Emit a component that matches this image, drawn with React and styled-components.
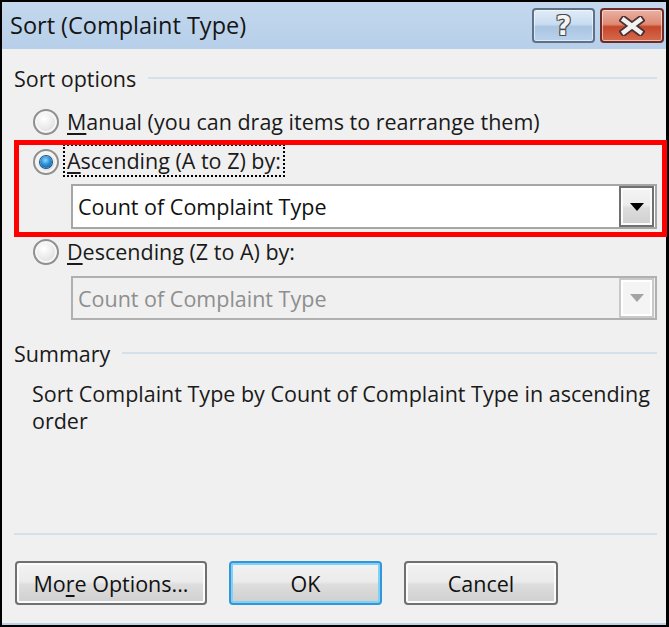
import React from 'react';
import styled, { createGlobalStyle } from 'styled-components';

const GlobalStyle = createGlobalStyle`
  html, body {
    margin: 0;
    padding: 0;
    background: #ffffff;
  }
  body {
    font-family: "Open Sans", "Noto Sans", "DejaVu Sans", sans-serif;
  }
`;

const Window = styled.div`
  width: 669px;
  height: 627px;
  box-sizing: border-box;
  background: #000;
  padding: 2px 3px 2px 2px;
  display: flex;
  flex-direction: column;
`;

const TitleBar = styled.div`
  height: 47px;
  flex: none;
  display: flex;
  align-items: flex-start;
  padding-left: 8px;
  background: linear-gradient(#c3d8ee, #b7cfe9);
`;

const Title = styled.div`
  font-size: 23.5px;
  line-height: 47px;
  color: #151515;
  flex: 1;
  white-space: nowrap;
`;

const CaptionButton = styled.div`
  width: ${(p) => p.w}px;
  height: 35px;
  margin-top: 6px;
  margin-right: ${(p) => p.mr}px;
  box-sizing: border-box;
  border: 2px solid ${(p) => (p.close ? '#6e2c28' : '#5f7188')};
  border-radius: 4px;
  display: flex;
  align-items: center;
  justify-content: center;
  background: ${(p) =>
    p.close
      ? 'linear-gradient(#eab0a2 0%, #de8a74 46%, #c6482c 54%, #d56a4d 100%)'
      : 'linear-gradient(#e1ecf7 0%, #c9dcf0 46%, #aac5e2 54%, #bad2ec 100%)'};
  box-shadow: inset 0 0 0 1px rgba(255, 255, 255, 0.55);
`;

const HelpGlyph = styled.span`
  font-family: "DejaVu Sans", sans-serif;
  font-weight: bold;
  font-size: 27px;
  line-height: 1;
  color: #f4f4f4;
  text-shadow: -1px -1px 0 #4a4a4a, 1px -1px 0 #4a4a4a, -1px 1px 0 #4a4a4a,
    1px 1px 0 #4a4a4a;
`;

const Body = styled.div`
  flex: 1;
  background: #f0f0f0;
  border-bottom: 2px solid #bcd2e9;
  padding: 16px 9px 18px 12px;
  display: flex;
  flex-direction: column;
  font-size: 21.5px;
  color: #1a1a1a;
`;

const SectionHeader = styled.div`
  height: 26px;
  margin-top: ${(p) => p.mt || 0}px;
  display: flex;
  align-items: center;
  gap: 12px;
  white-space: nowrap;
  &::after {
    content: '';
    flex: 1;
    height: 2px;
    background: #d6e0e8;
  }
`;

const Options = styled.div`
  padding-left: 19px;
  display: flex;
  flex-direction: column;
`;

const RadioRow = styled.div`
  height: ${(p) => p.h || 26}px;
  margin-top: ${(p) => p.mt || 0}px;
  display: flex;
  align-items: center;
  gap: 4px;
  white-space: nowrap;
`;

const RadioCircle = styled.span`
  width: 26px;
  height: 26px;
  box-sizing: border-box;
  border-radius: 50%;
  border: 2px solid #8f9090;
  background: radial-gradient(circle at 40% 35%, #ffffff 0%, #ececec 45%, #cfcfcf 100%);
  box-shadow: inset 0 0 0 2px #f6f6f6;
  display: flex;
  align-items: center;
  justify-content: center;
  flex: none;
  margin-top: 2px;
  &::after {
    content: '';
    display: ${(p) => (p.checked ? 'block' : 'none')};
    width: 12px;
    height: 12px;
    border-radius: 50%;
    background: radial-gradient(circle at 45% 35%, #8fd6ff 0%, #2a8fd6 45%, #0c4f8a 100%);
    box-shadow: 0 0 0 1px #1d4f7a;
  }
`;

const Label = styled.span`
  padding: 0 2px;
  line-height: 29px;
  border: 2px dotted ${(p) => (p.focused ? '#000' : 'transparent')};
`;

const Key = styled.span`
  text-decoration: underline;
  text-underline-offset: 3px;
  text-decoration-thickness: 2px;
`;

const Highlighted = styled.div`
  position: relative;
  margin-top: 10px;
  display: flex;
  flex-direction: column;
`;

const RedFrame = styled.div`
  position: absolute;
  top: -4px;
  left: -19px;
  right: -10px;
  bottom: -8px;
  border: 5px solid #ff0000;
  pointer-events: none;
`;

const Select = styled.div`
  height: ${(p) => p.h}px;
  margin-top: ${(p) => p.mt}px;
  margin-left: 38px;
  box-sizing: border-box;
  border: 2px solid ${(p) => (p.disabled ? '#b0b0b0' : '#a6a6a6')};
  background: ${(p) => (p.disabled ? '#f0f0f0' : '#ffffff')};
  color: ${(p) => (p.disabled ? '#8e8e8e' : '#111')};
  display: flex;
  align-items: center;
  padding-left: 5px;
  white-space: nowrap;
`;

const SelectText = styled.span`
  flex: 1;
`;

const DropButton = styled.span`
  width: 35px;
  align-self: stretch;
  margin: 0 1px 0 0;
  box-sizing: border-box;
  border: 2px solid ${(p) => (p.disabled ? '#c9c9c9' : '#707070')};
  background: ${(p) =>
    p.disabled
      ? '#f4f4f4'
      : 'linear-gradient(#f4f4f4 0%, #ececec 46%, #dcdcdc 54%, #d0d0d0 100%)'};
  box-shadow: inset 0 0 0 2px ${(p) => (p.disabled ? '#ffffff' : '#fbfbfb')};
  display: flex;
  align-items: center;
  justify-content: center;
`;

const Arrow = ({ color }) => (
  <svg width="14" height="8" viewBox="0 0 14 8">
    <path d="M0 0 H14 L7 8 Z" fill={color} />
  </svg>
);

const Summary = styled.div`
  margin-top: 14px;
  padding-left: 18px;
  line-height: 27px;
  white-space: nowrap;
`;

const Separator = styled.div`
  margin-top: auto;
  height: 2px;
  background: #d6e0e8;
`;

const ButtonRow = styled.div`
  margin-top: 26px;
  padding-left: 1px;
  display: flex;
  gap: 22px;
`;

const Button = styled.div`
  width: ${(p) => p.w}px;
  height: 44px;
  box-sizing: border-box;
  border: 2px solid ${(p) => (p.primary ? '#3396d6' : '#707070')};
  border-radius: 4px;
  background: linear-gradient(#f3f3f3 0%, #ebebeb 46%, #dddddd 54%, #cfcfcf 100%);
  box-shadow: inset 0 0 0 2px ${(p) => (p.primary ? '#7fd1f6' : '#fbfbfb')};
  display: flex;
  align-items: center;
  justify-content: center;
  color: #111;
  white-space: nowrap;
`;

export default function App() {
  return (
    <>
      <GlobalStyle />
      <Window>
        <TitleBar>
          <Title>Sort (Complaint Type)</Title>
          <CaptionButton w={63} mr={5}>
            <HelpGlyph>?</HelpGlyph>
          </CaptionButton>
          <CaptionButton w={64} mr={2} close>
            <svg width="26" height="20" viewBox="0 0 26 20">
              <path d="M5 4 L21 16 M21 4 L5 16" stroke="#4a3030" strokeWidth="8" strokeLinecap="square" />
              <path d="M5 4 L21 16 M21 4 L5 16" stroke="#f2f2f2" strokeWidth="4.5" strokeLinecap="square" />
            </svg>
          </CaptionButton>
        </TitleBar>
        <Body>
          <SectionHeader>Sort options</SectionHeader>
          <Options>
            <RadioRow mt={17}>
              <RadioCircle />
              <Label>
                <Key>M</Key>anual (you can drag items to rearrange them)
              </Label>
            </RadioRow>
            <Highlighted>
              <RadioRow h={33}>
                <RadioCircle checked />
                <Label focused>
                  <Key>A</Key>scending (A to Z) by:
                </Label>
              </RadioRow>
              <Select h={45} mt={7}>
                <SelectText>Count of Complaint Type</SelectText>
                <DropButton>
                  <Arrow color="#000" />
                </DropButton>
              </Select>
              <RedFrame />
            </Highlighted>
            <RadioRow mt={9}>
              <RadioCircle />
              <Label>
                <Key>D</Key>escending (Z to A) by:
              </Label>
            </RadioRow>
            <Select h={44} mt={12} disabled>
              <SelectText>Count of Complaint Type</SelectText>
              <DropButton disabled>
                <Arrow color="#a3a3a3" />
              </DropButton>
            </Select>
          </Options>
          <SectionHeader mt={20}>Summary</SectionHeader>
          <Summary>
            Sort Complaint Type by Count of Complaint Type in ascending
            <br />
            order
          </Summary>
          <Separator />
          <ButtonRow>
            <Button w={192}>
              Mo<Key>r</Key>e Options...
            </Button>
            <Button w={153} primary>
              OK
            </Button>
            <Button w={154}>Cancel</Button>
          </ButtonRow>
        </Body>
      </Window>
    </>
  );
}
